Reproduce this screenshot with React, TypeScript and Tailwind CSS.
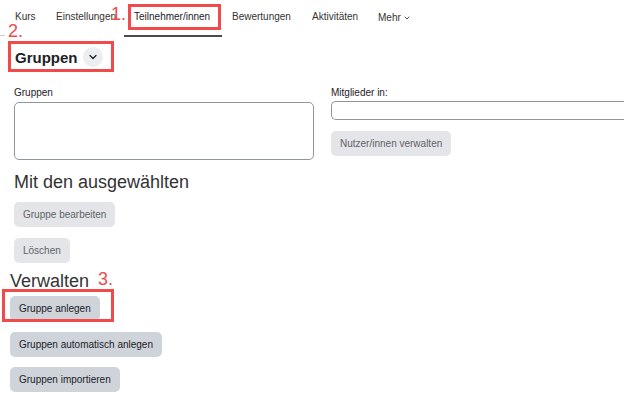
import { ChevronDown } from "lucide-react";

const tabs = [
  { label: "Kurs", w: "w-[41px]" },
  { label: "Einstellungen", w: "w-[78px]" },
  { label: "Teilnehmer/innen", w: "w-[98px]", active: true },
  { label: "Bewertungen", w: "w-[80px]" },
  { label: "Aktivitäten", w: "w-[66px]" },
];

function Btn({ label, disabled }: { label: string; disabled?: boolean }) {
  return (
    <button
      className={`h-[25px] px-[9px] rounded-[5px] text-[10px] leading-none ${
        disabled ? "bg-[#e3e5e8] text-[#5f6368]" : "bg-[#ced4da] text-[#1d2125]"
      }`}
    >
      {label}
    </button>
  );
}

export default function App() {
  return (
    <div className="relative w-[624px] h-[397px] overflow-hidden bg-white text-[#1d2125] font-['Liberation_Sans',sans-serif]">
      {/* nav */}
      <div className="flex h-[37px] pl-[5px]">
        {tabs.map((t) => (
          <div
            key={t.label}
            className={`flex items-center shrink-0 whitespace-nowrap pl-[10px] pb-[2px] text-[10px] border-b-2 ${t.w} ${
              t.active ? "border-[#4a4a4a] text-[#1d2125]" : "border-transparent text-[#333]"
            }`}
          >
            {t.label}
          </div>
        ))}
        <div className="flex items-center gap-[2px] pl-[10px] pb-[2px] text-[10px] text-[#333]">
          Mehr <ChevronDown size={8} strokeWidth={2.5} />
        </div>
      </div>
      <div className="w-[5px] h-px bg-[#ccc] -mt-[2px]" />

      {/* title */}
      <div className="flex items-center gap-[5px] pl-[15px] mt-[6px] h-[30px]">
        <h2 className="text-[15px] font-bold leading-none">Gruppen</h2>
        <span className="w-[20px] h-[20px] rounded-full bg-[#eceeef] flex items-center justify-center">
          <ChevronDown size={12} strokeWidth={2.5} />
        </span>
      </div>

      {/* form */}
      <div className="flex pl-[14px] mt-[15px]">
        <div className="w-[300px]">
          <div className="text-[10px] leading-[12px] mb-[3px]">Gruppen</div>
          <div className="h-[58px] rounded-[5px] border border-[#8f959e]" />
        </div>
        <div className="ml-[17px] flex-1">
          <div className="text-[10px] leading-[12px] mb-[2px]">Mitglieder in:</div>
          <div className="h-[19px] rounded-l-[5px] border border-r-0 border-[#8f959e]" />
          <div className="mt-[11px] flex">
            <Btn label="Nutzer/innen verwalten" disabled />
          </div>
        </div>
      </div>

      <div className="pl-[14px]">
        <h3 className="text-[18px] leading-[24px] mt-[10px] text-[#333]">Mit den ausgewählten</h3>
        <div className="mt-[8px] flex">
          <Btn label="Gruppe bearbeiten" disabled />
        </div>
        <div className="mt-[11px] flex">
          <Btn label="Löschen" disabled />
        </div>
      </div>

      <div className="pl-[10px]">
        <h3 className="text-[18px] leading-[24px] mt-[6px] text-[#333]">Verwalten</h3>
        <div className="mt-[3px] flex">
          <Btn label="Gruppe anlegen" />
        </div>
        <div className="mt-[11px] flex">
          <Btn label="Gruppen automatisch anlegen" />
        </div>
        <div className="mt-[10px] flex">
          <Btn label="Gruppen importieren" />
        </div>
      </div>

      {/* annotations */}
      <div className="absolute left-[128px] top-[4px] w-[93px] h-[26px] border-[3px] border-[#f04a4a]" />
      <div className="absolute left-[111px] top-[4px] text-[18px] leading-[20px] text-[#f04a4a]">1.</div>
      <div className="absolute left-[8px] top-[41px] w-[106px] h-[31px] border-[3px] border-[#f04a4a]" />
      <div className="absolute left-[8px] top-[21px] text-[18px] leading-[20px] text-[#f04a4a]">2.</div>
      <div className="absolute left-[2px] top-[289px] w-[112px] h-[33px] border-[3px] border-[#f04a4a]" />
      <div className="absolute left-[98px] top-[269px] text-[18px] leading-[20px] text-[#f04a4a]">3.</div>
    </div>
  );
}
